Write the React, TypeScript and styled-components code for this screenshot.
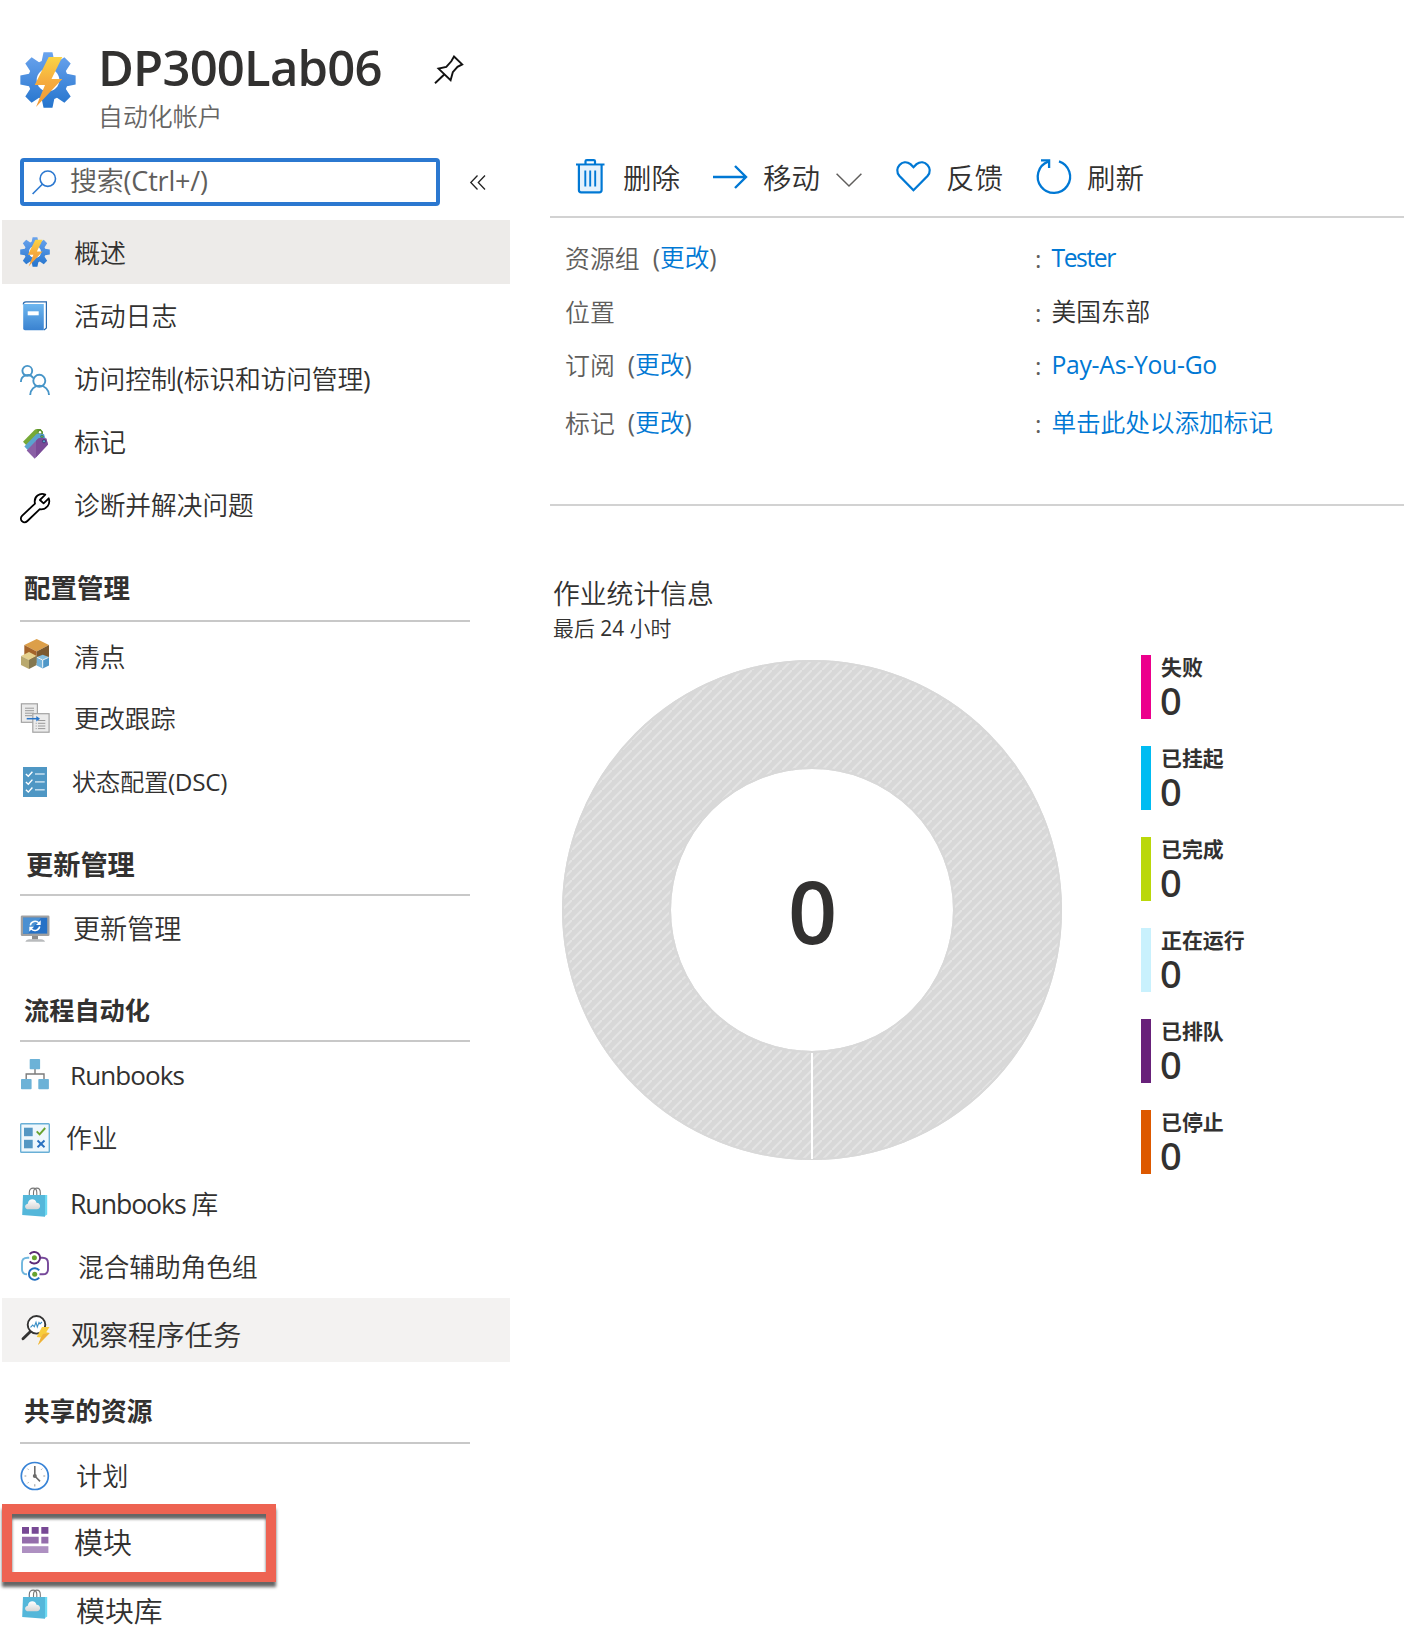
import React from 'react';
import styled, { createGlobalStyle } from 'styled-components';

const GlobalStyle = createGlobalStyle`
  body {
    margin: 0;
    background: #fff;
    color: #323130;
    font-family: 'Open Sans', 'Noto Sans CJK SC', sans-serif;
    font-weight: 350;
    overflow: hidden;
  }
  svg { display: block; flex: none; overflow: visible; }
`;

/* ---------- shared ---------- */

interface TextProps {
  $size: number;
  $track?: number;
  $dy?: number;
  $left?: number;
  $color?: string;
  $weight?: number;
}

const Text = styled.span<TextProps>`
  font-size: ${p => p.$size}px;
  line-height: 1.3;
  letter-spacing: ${p => p.$track ?? 0}px;
  margin-left: ${p => p.$left ?? 0}px;
  margin-top: ${p => (p.$dy ?? 0) * 2}px;
  color: ${p => p.$color ?? 'inherit'};
  font-weight: ${p => p.$weight ?? 'inherit'};
  white-space: pre;
`;

const Latin = styled.span`
  font-weight: 400;
`;

/* Chinese runs keep the lighter inherited weight; Latin runs are set regular. */
const Mixed = ({ children }: { children: string }) => (
  <>
    {children.split(/([\x20-\x7e]+)/).map((run, i) =>
      i % 2 ? <Latin key={i}>{run}</Latin> : run
    )}
  </>
);

/* ---------- page ---------- */

const Page = styled.div`
  width: 1404px;
  height: 1642px;
  display: flex;
  flex-direction: column;
  overflow: hidden;
`;

const Header = styled.header`
  height: 150px;
  box-sizing: border-box;
  padding: 36px 0 0 20px;
  display: flex;
  align-items: flex-start;
`;

const HeaderIcon = styled.div`
  padding-top: 16px;
`;

const Titles = styled.div`
  width: 335px;
  margin-left: 23px;
  display: flex;
  flex-direction: column;
`;

const Title = styled.h1`
  margin: 0;
  height: 67px;
  line-height: 62px;
  font-size: 49px;
  font-weight: 600;
  letter-spacing: -0.8px;
  margin-left: -1px;
  white-space: nowrap;
`;

const Subtitle = styled.div`
  font-size: 24.9px;
  line-height: 26px;
  color: #666564;
  margin-left: -1px;
`;

const PinSlot = styled.div`
  padding-top: 19px;
`;

const Columns = styled.div`
  display: flex;
  flex: 1;
`;

/* ---------- sidebar ---------- */

const Sidebar = styled.nav`
  width: 550px;
  display: flex;
  flex-direction: column;
`;

const SearchRow = styled.div`
  height: 70px;
  box-sizing: border-box;
  padding: 8px 0 14px 20px;
  display: flex;
  align-items: center;
`;

const SearchBox = styled.div`
  width: 420px;
  height: 48px;
  box-sizing: border-box;
  border: 4px solid #2b78d0;
  border-radius: 4px;
  padding-left: 8px;
  display: flex;
  align-items: center;
  margin-right: 30px;
`;

const Group = styled.section`
  display: flex;
  flex-direction: column;
`;

const GroupHead = styled.div<{ $height: number; $left: number }>`
  height: ${p => p.$height}px;
  width: 450px;
  box-sizing: border-box;
  margin-left: 20px;
  padding-left: ${p => p.$left}px;
  border-bottom: 2px solid #c8c8c8;
  display: flex;
  align-items: center;
`;

const Item = styled.div<{ $bg?: string }>`
  position: relative;
  width: 508px;
  height: 64px;
  box-sizing: border-box;
  margin-left: 2px;
  padding-left: 18px;
  background: ${p => p.$bg ?? 'transparent'};
  display: flex;
  align-items: center;
`;

const Callout = styled.div`
  position: absolute;
  left: 0;
  top: -4px;
  width: 274px;
  height: 78px;
  box-sizing: border-box;
  border: 10px solid #ee6352;
  box-shadow: 0 5px 3px rgba(0, 0, 0, 0.6), inset 0 5px 3px rgba(0, 0, 0, 0.6);
  z-index: 1;
`;

/* ---------- main ---------- */

const Main = styled.main`
  flex: 1;
  display: flex;
  flex-direction: column;
`;

const Toolbar = styled.div`
  height: 68px;
  box-sizing: border-box;
  border-bottom: 2px solid #d2d2d2;
  display: flex;
  align-items: center;
  padding: 0 0 12px 26px;
`;

const ToolButton = styled.div<{ $width: number }>`
  width: ${p => p.$width}px;
  display: flex;
  align-items: center;
`;

const Essentials = styled.div`
  height: 288px;
  box-sizing: border-box;
  border-bottom: 2px solid #d2d2d2;
  padding: 14px 0 0 15px;
  display: flex;
  flex-direction: column;
`;

const Field = styled.div<{ $height: number }>`
  height: ${p => p.$height}px;
  display: flex;
  align-items: center;
`;

const FieldName = styled.div`
  width: 470px;
  display: flex;
  align-items: center;
  color: #605e5c;
`;

const Link = styled.span`
  color: #0078d4;
`;

const Stats = styled.section`
  padding: 70px 0 0 3px;
  display: flex;
  flex-direction: column;
`;

const StatsTitle = styled.div`
  font-size: 26.8px;
  line-height: 35px;
  height: 38px;
`;

const StatsSub = styled.div`
  font-size: 20.9px;
  line-height: 29px;
  height: 46px;
`;

const ChartRow = styled.div`
  display: flex;
  padding-left: 9px;
`;

const Donut = styled.div`
  width: 500px;
  height: 500px;
  display: grid;
  place-items: center;
  & > * { grid-area: 1 / 1; }
`;

const Total = styled.div`
  font-size: 86px;
  font-weight: 650;
  line-height: 100px;
  padding: 2px 0 0 1px;
  z-index: 1;
`;

const Legend = styled.div`
  margin-left: 79px;
  margin-top: -5px;
  display: flex;
  flex-direction: column;
  gap: 27.6px;
`;

const LegendItem = styled.div<{ $color: string }>`
  height: 63.5px;
  box-sizing: border-box;
  border-left: 10px solid ${p => p.$color};
  padding-left: 10px;
  display: flex;
  flex-direction: column;
`;

const LegendName = styled.div`
  font-size: 20.9px;
  line-height: 25px;
  height: 30px;
  font-weight: 600;
  white-space: nowrap;
`;

const LegendValue = styled.div`
  font-family: 'Noto Sans', 'Open Sans', sans-serif;
  font-size: 38px;
  line-height: 40px;
  font-weight: 500;
  margin-left: -1px;
`;

/* ---------- icons ---------- */

const gearPath = (() => {
  const pts: string[] = [];
  for (let i = 0; i < 8; i++) {
    const a = (i * Math.PI) / 4 - Math.PI / 2;
    const at = (r: number, d: number) =>
      `${(28 + r * Math.cos(a + d)).toFixed(2)} ${(28 + r * Math.sin(a + d)).toFixed(2)}`;
    pts.push(at(20, -0.32), at(28, -0.16), at(28, 0.16), at(20, 0.32));
  }
  return `M${pts.join('L')}Z`;
})();

const Automation = ({ size }: { size: number }) => (
  <svg width={size} height={size} viewBox="0 0 56 56">
    <defs>
      <linearGradient id={`gear${size}`} x1="0" y1="0" x2="0" y2="1">
        <stop offset="0" stopColor="#6ba4ee" />
        <stop offset="1" stopColor="#2474cd" />
      </linearGradient>
      <linearGradient id={`bolt${size}`} x1="0" y1="0" x2="0" y2="1">
        <stop offset="0" stopColor="#fbd445" />
        <stop offset="0.5" stopColor="#f5ab3e" />
        <stop offset="1" stopColor="#f09a38" />
      </linearGradient>
    </defs>
    <path d={gearPath} fill={`url(#gear${size})`} />
    <circle cx="28" cy="28" r="11.3" fill="#fff" />
    <path d="M28.7 5H42.3L31.5 27H42.3L16 55 25 33H14.7Z" fill={`url(#bolt${size})`} />
  </svg>
);

const Svg30 = ({ children }: { children: React.ReactNode }) => (
  <svg width="30" height="30" viewBox="0 0 30 30" fill="none">{children}</svg>
);

const Pin = () => (
  <svg width="30" height="29" viewBox="0 0 30 29" fill="none" stroke="#111" strokeWidth="1.9">
    <path d="M20 1.5 28.2 9.4 23.5 11.8 18.8 17.2 16.6 25.2 4.5 13.6 12.3 11.9 17.3 6.3Z" />
    <path d="M10.5 19.2 1 28.2" />
  </svg>
);

const SearchIcon = () => (
  <svg width="25" height="25" viewBox="0 0 25 25" fill="none" stroke="#2b78d0" strokeWidth="1.6">
    <circle cx="15.8" cy="8.7" r="7.7" />
    <path d="M10.3 14.3 0.6 24" />
  </svg>
);

const Collapse = () => (
  <svg width="16" height="15" viewBox="0 0 16 15" fill="none" stroke="#222" strokeWidth="1.3">
    <path d="M7.5 0.5.8 7.5 7.5 14.5M15 0.5 8.3 7.5 15 14.5" />
  </svg>
);

const Book = () => (
  <Svg30>
    <defs>
      <linearGradient id="book" x1="0" y1="0" x2="0" y2="1">
        <stop offset="0" stopColor="#6db6ef" />
        <stop offset="1" stopColor="#3a82d0" />
      </linearGradient>
    </defs>
    <path d="M3.3 3.5C3.3 1.5 4 .8 6 .8H26.4V27L24 29" fill="#fff" stroke="#2a6aae" strokeWidth="1.2" />
    <path d="M3.2 3H23.8V29.2H5Q3.2 29.2 3.2 27.4Z" fill="url(#book)" />
    <rect x="7.7" y="10.3" width="11" height="4" fill="#fff" />
  </Svg30>
);

const People = () => (
  <Svg30>
    <g stroke="#4795c8" strokeWidth="1.9">
      <circle cx="7.3" cy="5.8" r="4.9" />
      <path d="M.9 17A6.8 6.8 0 0 1 13.5 13.3" />
      <circle cx="19.3" cy="15.8" r="6" />
      <path d="M10.2 30A9.4 9.4 0 0 1 29 30" />
    </g>
  </Svg30>
);

const Tags = () => (
  <Svg30>
    <path d="M3 12.7 14.5 1Q15.5 0 17 0H20.5L23 3V8L8 18Z" fill="#76a937" />
    <path d="M17.2 0H20.5L23 3V8L18 5Z" fill="#5f9430" />
    <circle cx="20" cy="3.3" r="1.2" fill="#fff" />
    <path d="M4.3 17.5 16 5.4Q17 4.5 18.5 4.6L24 5 25.3 9 9 22.3Z" fill="#5ba3cf" />
    <circle cx="22" cy="7.6" r="1.4" fill="#76a937" stroke="#2b6a8f" strokeWidth=".8" />
    <path d="M6.7 21.5 18 9.7Q19 8.8 20.5 9L26.3 9.4 28 15.5 14.7 29.8Z" fill="#8a5fa5" />
    <path d="M16 11.8 18 9.7Q19 8.8 20.5 9L26.3 9.4 28 15.5 16 28.3Z" fill="#7a4b97" />
    <circle cx="24" cy="12.3" r="1.6" fill="#5ba3cf" stroke="#3f3470" strokeWidth=".9" />
  </Svg30>
);

const Wrench = () => (
  <Svg30>
    <path
      d="M25.3 1.6C20-.8 13.3 3.6 15 10.6L2 22.8C.4 24.5.6 27 2 28.2 3.5 29.6 5.8 29.6 7.4 28L19.8 16.2C26.5 17 30.8 11 28.7 5.3L23.6 10.3 19.9 7Z"
      stroke="#000" strokeWidth="1.8" strokeLinejoin="round" />
  </Svg30>
);

const Cubes = () => (
  <Svg30>
    <path d="M16.7 0 29 6 16.7 12.5 4.3 6Z" fill="#dc9f49" />
    <path d="M4.3 6 16.7 12.5V24L4.3 18Z" fill="#a4642a" />
    <path d="M29 6 16.7 12.5V24L29 19Z" fill="#7c592f" />
    <path d="M9 13 16.7 17 9 21 1 17Z" fill="#e5d28f" />
    <path d="M1 17 9 21V30L1 26Z" fill="#b9a96f" />
    <path d="M16.7 17 9 21V30L16.7 26Z" fill="#84774f" />
    <path d="M22.7 15.7 29 18 22.7 20.7 16.7 18Z" fill="#86bfdf" />
    <path d="M16.7 18 22.7 20.7V29.5L16.7 26.5Z" fill="#74b3da" />
    <path d="M29 18 22.7 20.7V29.5L29 26.5Z" fill="#4f97c8" />
    <path d="M17.2 18.4 22.7 21 28.5 18.4M22.7 21V28.5" stroke="#fff" strokeWidth=".9" />
  </Svg30>
);

const Tracking = () => (
  <Svg30>
    <rect x="1.4" y=".8" width="16" height="18.5" fill="#ebebeb" stroke="#a3a3a3" strokeWidth="1.2" />
    <path d="M5 5.2H14M5 7.7H14M5 10.2H14M5 12.7H12" stroke="#9a9a9a" strokeWidth="1" />
    <rect x="12.8" y="10.7" width="16.3" height="18.5" fill="#ebebeb" stroke="#a3a3a3" strokeWidth="1.2" />
    <path d="M18 17.5H25.3M18 20.3H25.3M18 23H25.3M18 25.6H25.3M15.7 20.3H16.7M15.7 23H16.7M15.7 25.6H16.7" stroke="#9a9a9a" strokeWidth="1" />
    <path d="M6.7 15.7H17" stroke="#2a75c7" strokeWidth="1.5" />
    <path d="M16.3 13 20 15.7 16.3 18.4Z" fill="#2a75c7" />
  </Svg30>
);

const Checklist = () => (
  <Svg30>
    <rect x="3" width="24" height="30" fill="#4f97c4" />
    {[7, 14.9, 22.8].map(y => (
      <g key={y} strokeWidth="1.4">
        <path d={`M5.9 ${y}L8.3 ${y + 2.3} 12.4 ${y - 2.3}`} stroke="#fff" />
        <path d={`M15 ${y}H24.7`} stroke="#cfe4f2" />
      </g>
    ))}
  </Svg30>
);

const Monitor = () => (
  <Svg30>
    <path d="M12 22H18V26.5H12Z" fill="#8d8d8d" />
    <rect x=".8" y="2.5" width="28.7" height="20.5" rx="1.3" fill="#a1a1a1" />
    <rect x="3" y="4.7" width="24.2" height="15.9" fill="#2671c6" />
    <path d="M3 4.7H21L8 20.6H3Z" fill="#4a90d2" />
    <path d="M5.3 28.7Q6 26.3 9 26.2H21Q24.3 26.3 25 28.7Z" fill="#b9bbbd" />
    <g stroke="#fff" strokeWidth="1.5">
      <path d="M10.3 12.3A4.9 4.9 0 0 1 18.7 9.8" />
      <path d="M19.7 13.5A4.9 4.9 0 0 1 11.3 16" />
    </g>
    <path d="M20.7 7.3V12H16ZM9.3 18.5V13.8H14Z" fill="#fff" />
  </Svg30>
);

const Tree = () => (
  <Svg30>
    <path d="M15 9V15M6.2 20V15H24V20" stroke="#7b7b7b" strokeWidth="1.4" />
    <rect x="9.7" width="10.4" height="10.2" rx=".8" fill="#6cb2d7" />
    <rect x="1" y="20" width="10.6" height="10.2" rx=".8" fill="#6cb2d7" />
    <rect x="18.3" y="20" width="10.6" height="10.2" rx=".8" fill="#6cb2d7" />
  </Svg30>
);

const Jobs = () => (
  <Svg30>
    <rect x=".7" y=".7" width="28.6" height="28.6" rx=".8" fill="#eef7fc" stroke="#69afd6" strokeWidth="1.4" />
    <rect x="4" y="4.7" width="8.7" height="8.5" fill="#5497c3" />
    <rect x="4" y="16.8" width="8.7" height="8.5" fill="#5497c3" />
    <path d="M16.7 8.3 19.6 11.3 25.2 5" stroke="#68a32f" strokeWidth="1.9" />
    <path d="M17.5 17.5 24.5 24.3M24.5 17.5 17.5 24.3" stroke="#2a71c0" strokeWidth="1.9" />
  </Svg30>
);

const Bag = () => (
  <Svg30>
    <defs>
      <linearGradient id="cloud" x1="0" y1="0" x2="0" y2="1">
        <stop offset="0" stopColor="#fff" />
        <stop offset="1" stopColor="#d5d5d5" />
      </linearGradient>
    </defs>
    <path d="M24.8 8H27.2V27.5L24.3 29.6Z" fill="#6cd9f2" />
    <path d="M3 8H25V29.7L2.2 28Z" fill="#54b7da" />
    <path d="M9.3 8V5.5C9.3-.3 16.8-.3 16.8 5.5V8M13.5 8V5.5C13.5-.3 20.3-.3 20.3 5.5V8" stroke="#777" strokeWidth="1.1" />
    <path d="M8.5 22.3C4.2 22.3 4 17.3 7.8 16.7 8.3 11.2 15.5 10.8 16.5 15.8 21.3 16 21.2 22.3 16.8 22.3Z" fill="url(#cloud)" />
  </Svg30>
);

const Hybrid = () => (
  <Svg30>
    <g strokeWidth="1.9">
      <path d="M9.2 6.8H7.5Q2 6.8 2 12V18Q2 23.3 7 23.3" stroke="#6fb6de" />
      <path d="M20.3 6.8H22.5Q28 6.8 28 12V18Q28 23.3 23 23.3H19.5" stroke="#76489a" />
      <path d="M9.7 3.2A5.8 5.8 0 1 1 9.7 10.3" stroke="#5d2a78" />
      <path d="M19.2 19.4A5.8 5.8 0 1 0 19.2 26.7" stroke="#2470c0" />
    </g>
    <circle cx="14.4" cy="6.7" r="2.5" fill="#68a32f" />
    <circle cx="14.7" cy="23.3" r="2.5" fill="#68a32f" />
  </Svg30>
);

const Watcher = () => (
  <Svg30>
    <path d="M10.5 16.5 3 23.7" stroke="#333" strokeWidth="2.9" strokeLinecap="round" />
    <circle cx="16.5" cy="9.8" r="8.8" fill="#fff" stroke="#333" strokeWidth="1.9" />
    <path d="M10.5 12.3 12.7 10 14.3 11.8 16 7.3 17.3 12 19 7.5 20 9 22 7" stroke="#3a8fc7" strokeWidth="1.1" />
    <path d="M22 12H29.5L26.2 17.3 29.7 18 18 30 21 22.5 16.7 22Z" fill="#f8cd3c" />
    <path d="M29.7 18 18 30 21 22.5 23 19Z" fill="#eeb13a" />
  </Svg30>
);

const Clock = () => (
  <Svg30>
    <circle cx="14.8" cy="15" r="13.5" fill="#fff" stroke="#3883d6" strokeWidth="1.7" />
    <path d="M14.8 5V15L20 20.4" stroke="#6b6b6b" strokeWidth="1.6" />
    <circle cx="14.8" cy="15" r="2" fill="#6b6b6b" />
    <path d="M14.8 23.2V25.5M4.5 15H6.3M23.3 15H25.2M7.5 7.7 8.5 8.7M21.2 8.7 22.2 7.7M7.5 22.3 8.5 21.3" stroke="#999" strokeWidth="1" />
  </Svg30>
);

const Modules = () => (
  <Svg30>
    <path d="M2 2H9V8.8H2ZM11.7 2H18.7V8.8H11.7ZM21.3 2H28.4V8.8H21.3Z" fill="#774894" />
    <path d="M2 11.7H18.7V18.4H2ZM21.3 11.7H28.4V18.4H21.3Z" fill="#946dab" />
    <path d="M2 21.2H28.4V28H2Z" fill="#ae90c1" />
  </Svg30>
);

const Trash = () => (
  <svg width="29" height="35" viewBox="0 0 29 35" fill="none" stroke="#0078d4" strokeWidth="2.2">
    <path d="M4 7H24.5V32H4Z" fill="#e3f1fc" stroke="none" />
    <path d="M0 5.5H28.5M9.5 5V2.3Q9.5 1.2 10.8 1.2H17.7Q19 1.2 19 2.3V5" />
    <path d="M2.9 6V31Q2.9 33.3 5.2 33.3H23.3Q25.6 33.3 25.6 31V6" />
    <path d="M9.3 11.5V27.5M14.2 11.5V27.5M19.2 11.5V27.5" strokeWidth="1.9" />
  </svg>
);

const Arrow = () => (
  <svg width="35" height="24" viewBox="0 0 35 24" fill="none" stroke="#0078d4" strokeWidth="2.4">
    <path d="M0 12H33M22 1 33 12 22 23" />
  </svg>
);

const Chevron = () => (
  <svg width="26" height="14" viewBox="0 0 26 14" fill="none" stroke="#605e5c" strokeWidth="1.5">
    <path d="M.6.7 13 13 25.4.7" />
  </svg>
);

const Heart = () => (
  <svg width="35" height="31" viewBox="0 0 35 31" fill="none" stroke="#0078d4" strokeWidth="2.3">
    <path d="M17.5 29.2 3.5 15C-3 7.5 6.5-3 14.5 3.2L17.5 6.2 20.5 3.2C28.5-3 38 7.5 31.5 15Z" />
  </svg>
);

const Refresh = () => (
  <svg width="36" height="35" viewBox="0 0 36 35" fill="none" stroke="#0078d4" strokeWidth="2.3">
    <path d="M23 2.3A16.2 16.2 0 1 1 12 2.6" />
    <path d="M5 1.3H13.100V9" />
  </svg>
);

const Ring = () => (
  <svg width="500" height="500" viewBox="0 0 500 500">
    <defs>
      <pattern id="hatch" width="10" height="10" patternUnits="userSpaceOnUse">
        <rect width="10" height="10" fill="#d8d8d8" />
        <path d="M0 10 10 0" stroke="#e4e4e4" strokeWidth="2" />
      </pattern>
    </defs>
    <circle cx="250" cy="250" r="195.5" fill="none" stroke="url(#hatch)" strokeWidth="109" />
    <circle cx="250" cy="250" r="249" fill="none" stroke="#d8d8d8" strokeWidth="2" />
    <circle cx="250" cy="250" r="142" fill="none" stroke="#d8d8d8" strokeWidth="2" />
    <path d="M250 393V499" stroke="#fff" strokeWidth="2" />
  </svg>
);

/* ---------- data ---------- */

interface Entry {
  icon: React.ReactNode;
  label: string;
  size: number;
  left: number;
  dy?: number;
  track?: number;
  bg?: string;
  callout?: boolean;
}

interface Section {
  title?: string;
  left?: number;
  size?: number;
  dy?: number;
  items: Entry[];
}

const sections: Section[] = [
  {
    items: [
      { icon: <Automation size={30} />, label: '概述', size: 26, left: 24, dy: 2, bg: '#edebe9' },
      { icon: <Book />, label: '活动日志', size: 25.8, left: 24, dy: 1 },
      { icon: <People />, label: '访问控制(标识和访问管理)', size: 25.8, left: 24, dy: 0, track: -0.2 },
      { icon: <Tags />, label: '标记', size: 26, left: 24, dy: -1 },
      { icon: <Wrench />, label: '诊断并解决问题', size: 25.7, left: 24, dy: -2 },
    ],
  },
  {
    title: '配置管理', left: 4, size: 26.5, dy: 8,
    items: [
      { icon: <Cubes />, label: '清点', size: 25.8, left: 24, dy: 3.5 },
      { icon: <Tracking />, label: '更改跟踪', size: 25.4, left: 24, dy: 1 },
      { icon: <Checklist />, label: '状态配置(DSC)', size: 24.3, left: 22, dy: 0, track: -0.3 },
    ],
  },
  {
    title: '更新管理', left: 6, size: 27.2, dy: 11,
    items: [{ icon: <Monitor />, label: '更新管理', size: 27.1, left: 23, dy: 0.5 }],
  },
  {
    title: '流程自动化', left: 4, size: 25.2, dy: 10,
    items: [
      { icon: <Tree />, label: 'Runbooks', size: 26, left: 20, dy: 2, track: -0.9 },
      { icon: <Jobs />, label: '作业', size: 25.8, left: 16, dy: 0.5 },
      { icon: <Bag />, label: 'Runbooks 库', size: 26.7, left: 20, dy: 2, track: -1.1 },
      { icon: <Hybrid />, label: '混合辅助角色组', size: 25.7, left: 28, dy: 2 },
      { icon: <Watcher />, label: '观察程序任务', size: 28.4, left: 21, dy: 5, bg: '#f3f2f1' },
    ],
  },
  {
    title: '共享的资源', left: 4, size: 25.7, dy: 9.5,
    items: [
      { icon: <Clock />, label: '计划', size: 26.2, left: 26, dy: 0.5 },
      { icon: <Modules />, label: '模块', size: 29, left: 24, dy: 2.5, callout: true },
      { icon: <Bag />, label: '模块库', size: 28.9, left: 26, dy: 7 },
    ],
  },
];

const fields = [
  { name: '资源组', change: true, value: 'Tester', link: true, height: 54, track: -1.4 },
  { name: '位置', change: false, value: '美国东部', link: false, height: 53, track: 0 },
  { name: '订阅', change: true, value: 'Pay-As-You-Go', link: true, height: 53, track: -0.25 },
  { name: '标记', change: true, value: '单击此处以添加标记', link: true, height: 64, track: -0.1 },
];

const legend = [
  ['失败', '#ec008c'],
  ['已挂起', '#00bcf2'],
  ['已完成', '#bad80a'],
  ['正在运行', '#c9f1fd'],
  ['已排队', '#68217a'],
  ['已停止', '#dd5900'],
];

export default function App() {
  return (
    <Page>
      <GlobalStyle />
      <Header>
        <HeaderIcon><Automation size={56} /></HeaderIcon>
        <Titles>
          <Title>DP300Lab06</Title>
          <Subtitle>自动化帐户</Subtitle>
        </Titles>
        <PinSlot><Pin /></PinSlot>
      </Header>
      <Columns>
        <Sidebar>
          <SearchRow>
            <SearchBox>
              <SearchIcon />
              <Text $size={27} $left={13} $dy={-1.5} $track={-0.2} $color="#605e5c"><Mixed>搜索(Ctrl+/)</Mixed></Text>
            </SearchBox>
            <Collapse />
          </SearchRow>
          {sections.map((s, i) => (
            <Group key={i}>
              {s.title && (
                <GroupHead $height={82} $left={s.left!}>
                  <Text $size={s.size!} $dy={s.dy} $weight={700}>{s.title}</Text>
                </GroupHead>
              )}
              {s.items.map((it, j) => (
                <Item key={j} $bg={it.bg}>
                  {it.callout && <Callout />}
                  {it.icon}
                  <Text $size={it.size} $left={it.left} $dy={it.dy} $track={it.track}><Mixed>{it.label}</Mixed></Text>
                </Item>
              ))}
            </Group>
          ))}
        </Sidebar>
        <Main>
          <Toolbar>
            <ToolButton $width={137}><Trash /><Text $size={28.5} $left={18} $dy={1.5}>删除</Text></ToolButton>
            <ToolButton $width={183}>
              <Arrow /><Text $size={28.5} $left={15} $dy={1.5}>移动</Text>
              <Text $size={10} $left={16} $dy={3.5}><Chevron /></Text>
            </ToolButton>
            <ToolButton $width={140}><Heart /><Text $size={28.5} $left={15} $dy={1.5}>反馈</Text></ToolButton>
            <ToolButton $width={140}><Refresh /><Text $size={28.5} $left={15} $dy={1.5}>刷新</Text></ToolButton>
          </Toolbar>
          <Essentials>
            {fields.map(f => (
              <Field key={f.name} $height={f.height}>
                <FieldName>
                  <Text $size={24.9} $dy={-0.5}>{f.name}</Text>
                  {f.change && (
                    <Text $size={24.7} $left={13} $dy={-0.5}>
                      <Latin>(</Latin><Link>更改</Link><Latin>)</Latin>
                    </Text>
                  )}
                </FieldName>
                <Text $size={24.5} $color="#605e5c" $weight={400}>:</Text>
                <Text $size={24.7} $left={10} $dy={-0.5} $track={f.track} $color={f.link ? '#0078d4' : undefined}>
                  <Mixed>{f.value}</Mixed>
                </Text>
              </Field>
            ))}
          </Essentials>
          <Stats>
            <StatsTitle>作业统计信息</StatsTitle>
            <StatsSub><Mixed>最后 24 小时</Mixed></StatsSub>
            <ChartRow>
              <Donut>
                <Ring />
                <Total>0</Total>
              </Donut>
              <Legend>
                {legend.map(([name, color]) => (
                  <LegendItem key={name} $color={color}>
                    <LegendName>{name}</LegendName>
                    <LegendValue>0</LegendValue>
                  </LegendItem>
                ))}
              </Legend>
            </ChartRow>
          </Stats>
        </Main>
      </Columns>
    </Page>
  );
}
